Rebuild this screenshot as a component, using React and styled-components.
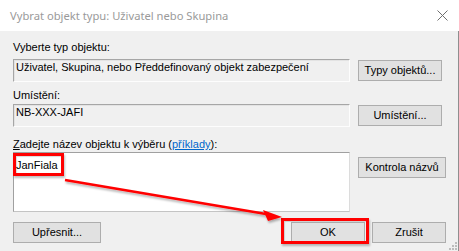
import React from 'react';
import styled, { createGlobalStyle } from 'styled-components';

const GlobalStyle = createGlobalStyle`
  * {
    box-sizing: border-box;
  }

  body {
    margin: 0;
    background: #f0f0f0;
  }
`;

const Dialog = styled.div`
  position: relative;
  width: 459px;
  height: 251px;
  overflow: hidden;
  background: #f0f0f0;
  color: #000;
  font-family: "Liberation Sans", Arial, sans-serif;
  font-size: 11px;
`;

const TitleBar = styled.div`
  display: flex;
  align-items: center;
  justify-content: space-between;
  height: 31px;
  padding: 0 11px 0 10px;
  background: #fff;
`;

const Title = styled.div`
  color: #9a9a9a;
  font-family: "Noto Sans", "Open Sans", sans-serif;
  font-size: 11.2px;
  line-height: 16px;
`;

const CloseIcon = styled.svg`
  display: block;
  width: 11px;
  height: 11px;
  margin-top: -1px;
`;

const Body = styled.div`
  display: flex;
  flex-direction: column;
  height: 220px;
  padding: 10px 12px 0 13px;
  border-right: 1px solid #8f8f8f;
`;

const Label = styled.div`
  margin-top: ${props => props.$gap || 0}px;
  line-height: 13px;
  white-space: nowrap;
`;

const AccessKey = styled.span`
  text-decoration: underline;
`;

const Link = styled.span`
  color: #0066cc;
  text-decoration: underline;
`;

const Row = styled.div`
  display: flex;
  align-items: flex-start;
  gap: 8px;
  margin-top: ${props => props.$gap || 0}px;
`;

const ReadOnlyField = styled.div`
  width: 337px;
  height: 23px;
  padding: 1px 2px 0;
  border: 1px solid;
  border-color: #a6a6a6 #fdfdfd #fdfdfd #a6a6a6;
  box-shadow: inset 1px 1px 0 #e3e3e3;
  background: #f0f0f0;
  line-height: 13px;
  white-space: nowrap;
`;

const NameBox = styled.div`
  width: 337px;
  height: 60px;
  padding: 6px 2px 0;
  border: 1px solid;
  border-color: #a0a0a0 #dcdcdc #c4c4c4 #a0a0a0;
  background: #fff;
  line-height: 13px;
`;

const Button = styled.div`
  display: flex;
  align-items: center;
  justify-content: center;
  flex: none;
  width: ${props => props.$width || 84}px;
  height: 21px;
  margin-top: ${props => props.$offset || 0}px;
  border: 1px solid #adadad;
  background: #e1e1e1;
  line-height: 13px;
`;

const ButtonBar = styled.div`
  display: flex;
  align-items: center;
  gap: 7px;
  margin-top: 10px;
`;

const Spacer = styled.div`
  flex: 1;
`;

const Highlight = styled.div`
  position: absolute;
  left: ${props => props.$x}px;
  top: ${props => props.$y}px;
  width: ${props => props.$w}px;
  height: ${props => props.$h}px;
  border: 3px solid #ff0000;
  box-shadow: 1px 2px 2px rgba(0, 0, 0, 0.25), inset 1px 1px 1px rgba(0, 0, 0, 0.15);
  pointer-events: none;
`;

const Arrow = styled.svg`
  position: absolute;
  left: 0;
  top: 0;
  width: 459px;
  height: 251px;
  pointer-events: none;
`;

const Grip = styled.svg`
  position: absolute;
  right: 2px;
  bottom: 1px;
  width: 8px;
  height: 8px;
`;

const App = () => (
  <>
    <GlobalStyle />
    <Dialog>
      <TitleBar>
        <Title>Vybrat objekt typu: Uživatel nebo Skupina</Title>
        <CloseIcon viewBox="0 0 11 11">
          <path d="M0.5 0.5 L10.5 10.5 M10.5 0.5 L0.5 10.5" stroke="#6f6f6f" strokeWidth="1" fill="none" />
        </CloseIcon>
      </TitleBar>

      <Body>
        <Label>Vyberte typ objektu:</Label>
        <Row $gap={5}>
          <ReadOnlyField>Uživatel, Skupina, nebo Předdefinovaný objekt zabezpečení</ReadOnlyField>
          <Button $offset={1}>Typy objektů...</Button>
        </Row>

        <Label $gap={7}>Umístění:</Label>
        <Row $gap={2}>
          <ReadOnlyField>NB-XXX-JAFI</ReadOnlyField>
          <Button $offset={1}>Umístění...</Button>
        </Row>

        <Label $gap={11}>
          <AccessKey>Z</AccessKey>adejte název objektu k výběru (<Link>příklady</Link>):
        </Label>
        <Row $gap={1}>
          <NameBox>JanFiala</NameBox>
          <Button $width={88} $offset={5}>Kontrola názvů</Button>
        </Row>

        <ButtonBar>
          <Button $width={88}>Upřesnit...</Button>
          <Spacer />
          <Button $width={74}>OK</Button>
          <Button $width={74}>Zrušit</Button>
        </ButtonBar>
      </Body>

      <Highlight $x={13} $y={153} $w={51} $h={23} />
      <Highlight $x={281} $y={218} $w={88} $h={26} />

      <Arrow viewBox="0 0 459 251">
        <defs>
          <filter id="arrowShadow" x="-10%" y="-50%" width="120%" height="200%">
            <feDropShadow dx="1" dy="2" stdDeviation="1" floodColor="#000" floodOpacity="0.3" />
          </filter>
        </defs>
        <g filter="url(#arrowShadow)">
          <line x1="65" y1="180" x2="266" y2="214" stroke="#ff0000" strokeWidth="2.5" />
          <polygon points="263,210 268,221 282,217" fill="#ff0000" />
        </g>
      </Arrow>

      <Grip viewBox="0 0 8 8">
        <rect x="6" y="0" width="2" height="2" fill="#bcbcbc" />
        <rect x="3" y="3" width="2" height="2" fill="#bcbcbc" />
        <rect x="6" y="3" width="2" height="2" fill="#bcbcbc" />
        <rect x="0" y="6" width="2" height="2" fill="#bcbcbc" />
        <rect x="3" y="6" width="2" height="2" fill="#bcbcbc" />
        <rect x="6" y="6" width="2" height="2" fill="#bcbcbc" />
      </Grip>
    </Dialog>
  </>
);

export default App;
